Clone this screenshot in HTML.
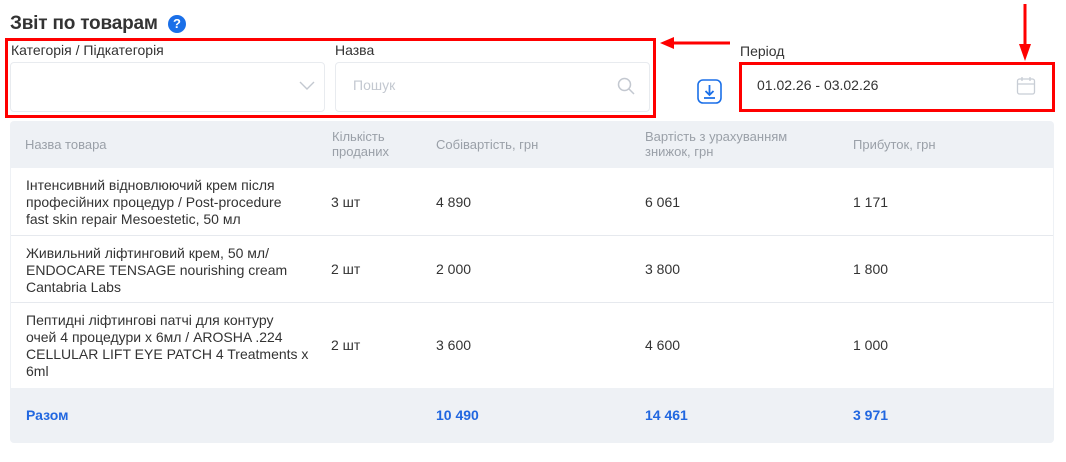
<!DOCTYPE html>
<html><head><meta charset="utf-8"><style>
*{margin:0;padding:0;box-sizing:border-box}
body{width:1066px;height:462px;background:#fff;font-family:"Liberation Sans",sans-serif;color:#333;position:relative;overflow:hidden}
.abs{position:absolute}
.title{left:10px;top:13px;font-size:19px;font-weight:bold;color:#333;letter-spacing:-0.2px}
.q{left:168px;top:15px;width:18px;height:18px;border-radius:50%;background:#1a6fe8;color:#fff;font-size:13px;font-weight:bold;text-align:center;line-height:18px}
.lbl{font-size:14px;color:#333}
.inp{border:1px solid #e8ebef;border-radius:4px;background:#fff}
.red{border:3px solid #f00}
.tbl{left:10px;top:121px;width:1044px;height:322px;background:#eef1f5;border-radius:4px}
.row{position:absolute;left:1px;width:1042px;background:#fff;border-bottom:1px solid #e6e9ee}
.c{position:absolute;font-size:14px;line-height:17px;color:#333}
.h{position:absolute;font-size:13px;line-height:15px;color:#9aa0a8}
.t{position:absolute;font-size:14px;font-weight:bold;color:#2167e0;top:286px}
</style></head><body>
<div class="abs title">Звіт по товарам</div>
<div class="abs q">?</div>
<div class="abs red" style="left:5px;top:38px;width:651px;height:80px"></div>
<div class="abs lbl" style="left:11px;top:42px">Категорія / Підкатегорія</div>
<div class="abs lbl" style="left:335px;top:42px">Назва</div>
<div class="abs inp" style="left:10px;top:62px;width:315px;height:50px"></div>
<svg class="abs" style="left:299px;top:81px" width="16" height="10"><path d="M1 1l7 7 7-7" fill="none" stroke="#c3c8d0" stroke-width="1.4"/></svg>
<div class="abs inp" style="left:335px;top:62px;width:315px;height:50px"></div>
<div class="abs" style="left:353px;top:77px;font-size:14px;color:#c3c8d0">Пошук</div>
<svg class="abs" style="left:617px;top:77px" width="18" height="18"><circle cx="7.5" cy="7.5" r="6" fill="none" stroke="#c3c8d0" stroke-width="1.5"/><path d="M12 12l5 5" stroke="#c3c8d0" stroke-width="1.5"/></svg>
<svg class="abs" style="left:660px;top:37px" width="70" height="12"><path d="M70 6H12" stroke="#f00" stroke-width="3"/><path d="M0 6l14-6v12z" fill="#f00"/></svg>
<svg class="abs" style="left:1019px;top:4px" width="12" height="58"><path d="M6 0v44" stroke="#f00" stroke-width="3"/><path d="M0 40h12l-6 17z" fill="#f00"/></svg>
<svg class="abs" style="left:697px;top:79px" width="25" height="25"><rect x="1" y="1" width="23" height="23" rx="5" fill="none" stroke="#1a6fe8" stroke-width="1.6"/><path d="M12.5 6v10M8.5 12l4 4 4-4M7 19h11" fill="none" stroke="#1a6fe8" stroke-width="1.8"/></svg>
<div class="abs lbl" style="left:740px;top:43px">Період</div>
<div class="abs red" style="left:739px;top:62px;width:316px;height:50px"></div>
<div class="abs" style="left:757px;top:77px;font-size:14px;color:#333">01.02.26 - 03.02.26</div>
<svg class="abs" style="left:1016px;top:76px" width="20" height="20"><rect x="1.5" y="3" width="17" height="15" rx="2" fill="none" stroke="#c8cdd5" stroke-width="1.3"/><path d="M1.5 8h17M6 1v4M14 1v4" stroke="#c8cdd5" stroke-width="1.3"/></svg>
<div class="abs tbl">
<div class="h" style="left:15px;top:16px">Назва товара</div>
<div class="h" style="left:322px;top:8px">Кількість<br>проданих</div>
<div class="h" style="left:426px;top:16px">Собівартість, грн</div>
<div class="h" style="left:635px;top:8px">Вартість з урахуванням<br>знижок, грн</div>
<div class="h" style="left:843px;top:16px">Прибуток, грн</div>
<div class="row" style="top:47px;height:68px">
<div class="c" style="left:15px;top:9px">Інтенсивний відновлюючий крем після<br>професійних процедур / Post-procedure<br>fast skin repair Mesoestetic, 50 мл</div>
<div class="c" style="left:320px;top:26px">3 шт</div><div class="c" style="left:425px;top:26px">4 890</div><div class="c" style="left:634px;top:26px">6 061</div><div class="c" style="left:842px;top:26px">1 171</div></div>
<div class="row" style="top:115px;height:67px">
<div class="c" style="left:15px;top:9px">Живильний ліфтинговий крем, 50 мл/<br>ENDOCARE TENSAGE nourishing cream<br>Cantabria Labs</div>
<div class="c" style="left:320px;top:25px">2 шт</div><div class="c" style="left:425px;top:25px">2 000</div><div class="c" style="left:634px;top:25px">3 800</div><div class="c" style="left:842px;top:25px">1 800</div></div>
<div class="row" style="top:182px;height:85px;border-bottom:none">
<div class="c" style="left:15px;top:9px">Пептидні ліфтингові патчі для контуру<br>очей 4 процедури x 6мл / AROSHA .224<br>CELLULAR LIFT EYE PATCH 4 Treatments x<br>6ml</div>
<div class="c" style="left:320px;top:34px">2 шт</div><div class="c" style="left:425px;top:34px">3 600</div><div class="c" style="left:634px;top:34px">4 600</div><div class="c" style="left:842px;top:34px">1 000</div></div>
<div class="t" style="left:16px">Разом</div><div class="t" style="left:426px">10 490</div><div class="t" style="left:635px">14 461</div><div class="t" style="left:843px">3 971</div>
</div>
</body></html>
